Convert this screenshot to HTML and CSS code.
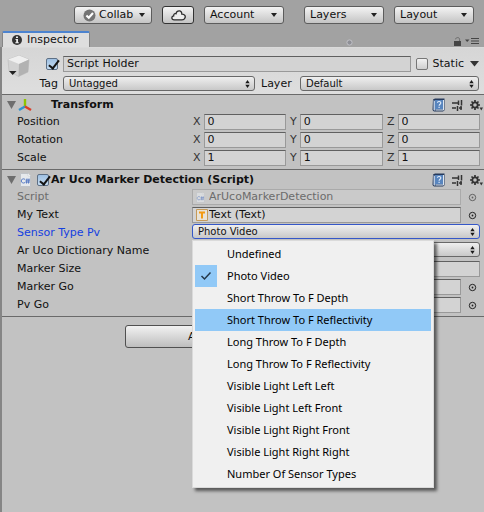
FILE: index.html
```html
<!DOCTYPE html>
<html lang="en">
<head>
<meta charset="utf-8">
<title>Inspector</title>
<link rel="stylesheet" href="styles.css">
</head>
<body>
<svg class="defs" aria-hidden="true">
  <symbol id="updown" viewBox="0 0 5 8"><path d="M0.3 3.2 2.5 0 4.7 3.2zM0.3 4.8 2.5 8 4.7 4.8z" fill="#1a1a1a"/></symbol>
  <symbol id="down" viewBox="0 0 6 4"><path d="M0 0H6L3 4z" fill="#222"/></symbol>
  <symbol id="book" viewBox="0 0 13 14">
    <path d="M1 1.5 3 .5H12.5V12.5H12L11 13.5H2L.5 12z" fill="#263a5c"/>
    <path d="M1.5 2 3 3V13L1.5 11.5z" fill="#b9c9df"/>
    <path d="M3 2H11V11.5H3z" fill="#5885be"/>
    <path d="M3.5 12H11.5V2" fill="none" stroke="#dce5ef"/>
    <path d="M5.4 4.8C5.5 3 8.9 3 8.8 5 8.7 6.3 7.2 6.3 7.1 7.8M7.1 8.8V10" fill="none" stroke="#e8f0fc" stroke-width="1.1"/>
  </symbol>
  <symbol id="sliders" viewBox="0 0 11 11"><path d="M0 3H6M0 8H4M7 8H10M9 3H10M6.5 0.5V5M9.5 0V5.5M5.5 6V11M9 6V10" fill="none" stroke="#333" stroke-width="1.5"/></symbol>
  <symbol id="gear" viewBox="0 0 13 11"><circle cx="5" cy="5" r="2.7" fill="none" stroke="#333" stroke-width="1.8"/><path d="M5 0V2M5 8V10M0 5H2M8 5H10M1.5 1.5 3 3M7 7 8.5 8.5M1.5 8.5 3 7M7 3 8.5 1.5" stroke="#333" stroke-width="1.7"/><path d="M9.6 7.5H13L11.3 10.5z" fill="#333"/></symbol>
  <symbol id="pick" viewBox="0 0 9 9"><circle cx="4.5" cy="4.5" r="3.2" fill="none" stroke="#222" stroke-width="1"/><circle cx="4.5" cy="4.5" r="0.9" fill="#222"/></symbol>
  <symbol id="csharp" viewBox="0 0 11 14"><path d="M.5 .5H8L10.5 3V13.5H.5z" fill="#e6e9ec" stroke="#bfc3c8"/><path d="M8 .5V3H10.5" fill="#fff" stroke="#c8ccd0" stroke-width=".6"/><path d="M5 6.3C2.5 5 1.3 6.6 1.3 8S2.8 10.8 5 9.6M7 5.5 6.5 10.5M9 5.5 8.5 10.5M5.5 7.1H10M5.3 9H9.8" fill="none" stroke="#4b70c0" stroke-width=".9"/></symbol>
</svg>

<header class="toolbar">
  <button class="tool" type="button">
    <svg class="ic-collab" viewBox="0 0 13 13"><circle cx="6.5" cy="6.5" r="6" fill="#747474"/><path d="M3.4 6.4 5.8 8.8 10 4" fill="none" stroke="#fff" stroke-width="2.1"/></svg>
    Collab<svg class="ic-down"><use href="#down"/></svg>
  </button>
  <button class="tool cloud" type="button" aria-label="Services">
    <svg class="ic-cloud" viewBox="0 0 15 11"><path d="M3.2 9.8C.2 9.8.1 6.2 2.7 5.9 2.5 3.7 4.3 3.3 5 3.7 6-.2 11-.1 10.8 4.1 13.8 4 14.9 6.3 13.8 8.2 13.2 9.5 12 9.8 11 9.8z" fill="#eee" stroke="#2b2b2b" stroke-width="1.3"/></svg>
  </button>
  <button class="tool wide" type="button">Account<svg class="ic-down"><use href="#down"/></svg></button>
  <button class="tool wide layers" type="button">Layers<svg class="ic-down"><use href="#down"/></svg></button>
  <button class="tool wide" type="button">Layout<svg class="ic-down"><use href="#down"/></svg></button>
</header>

<nav class="tabbar">
  <button class="tab" type="button">
    <svg class="ic-info" viewBox="0 0 10 10"><circle cx="5" cy="5" r="5" fill="#333"/><path d="M4 1.6H6V3H4zM3.5 4H6V7.3H6.8V8.2H3.3V7.3H4.2V5H3.5z" fill="#eee"/></svg>
    Inspector
  </button>
  <svg class="ic-dot" viewBox="0 0 7 7"><circle cx="3.5" cy="3.5" r="2.6" fill="#8e8f96" stroke="#c0c0c6"/></svg>
  <span class="tabtools">
    <button class="plain" type="button" aria-label="Lock"><svg class="ic-lock" viewBox="0 0 7 9"><path d="M0 4H7V9H0z" fill="#454545"/><path d="M1.5 2.3C1.8 0 5.6 0 5.6 2.3V4" fill="none" stroke="#6a6a6a"/></svg></button>
    <button class="plain" type="button" aria-label="Menu"><svg class="ic-menu" viewBox="0 0 14 6"><path d="M0 1.5H4.5L2.2 4z" fill="#454545"/><path d="M6 .5H14M6 3H14M6 5.5H14" stroke="#454545"/></svg></button>
  </span>
</nav>

<main class="panel">
  <section class="object">
    <div class="object-icon">
      <svg class="ic-cube" viewBox="0 0 23 22"><path d="M1 4.5 12 .5 22 4.5 21 17 11.5 21.5 2 16z" fill="#d2d2d2" stroke="#bbb" stroke-width=".6"/><path d="M1 4.5 12 .5 22 4.5 12 9z" fill="#efefef"/><path d="M12 9 22 4.5 21 17 11.5 21.5z" fill="#b2b2b2"/><path d="M2 16H9.5L5.7 20z" fill="#222"/></svg>
    </div>
    <div class="object-fields">
      <div class="object-row">
        <span class="lead"><input class="check" id="active" type="checkbox" checked aria-label="Active"></span>
        <input class="field" type="text" value="Script Holder" aria-label="Name">
        <input class="check static" id="static" type="checkbox"><label class="static-label" for="static">Static</label>
        <button class="plain" type="button" aria-label="Static options"><svg class="ic-static" viewBox="0 0 9 6"><path d="M0 0H9L4.5 5.5z" fill="#333"/></svg></button>
      </div>
      <div class="object-row">
        <label class="lead" for="tag">Tag</label>
        <span class="select"><select id="tag"><option>Untagged</option></select><svg class="ic-ud"><use href="#updown"/></svg></span>
        <label class="layer-label" for="layer">Layer</label>
        <span class="select layer"><select id="layer"><option>Default</option></select><svg class="ic-ud"><use href="#updown"/></svg></span>
      </div>
    </div>
  </section>

  <section class="component">
    <div class="head">
      <svg class="ic-fold" viewBox="0 0 9 8"><path d="M0 0H9L4.5 8z" fill="#6e6e6e"/></svg>
      <svg class="ic-axes" viewBox="0 0 14 14"><path d="M7 8.5V1" stroke="#8fc400" stroke-width="2.4"/><path d="M7 8.5 1 12" stroke="#2f93d0" stroke-width="2.4"/><path d="M7 8.5 13 12" stroke="#dd3b26" stroke-width="2.4"/></svg>
      <h2 class="transform-title">Transform</h2>
      <span class="head-tools">
        <button class="plain" type="button" aria-label="Help"><svg class="ic-book"><use href="#book"/></svg></button>
        <button class="plain" type="button" aria-label="Presets"><svg class="ic-sliders"><use href="#sliders"/></svg></button>
        <button class="plain" type="button" aria-label="Settings"><svg class="ic-gear"><use href="#gear"/></svg></button>
      </span>
    </div>
    <div class="row"><span>Position</span><div class="vector">
      <label>X<input class="field" type="text" value="0"></label><label>Y<input class="field" type="text" value="0"></label><label>Z<input class="field" type="text" value="0"></label></div></div>
    <div class="row"><span>Rotation</span><div class="vector">
      <label>X<input class="field" type="text" value="0"></label><label>Y<input class="field" type="text" value="0"></label><label>Z<input class="field" type="text" value="0"></label></div></div>
    <div class="row"><span>Scale</span><div class="vector">
      <label>X<input class="field" type="text" value="1"></label><label>Y<input class="field" type="text" value="1"></label><label>Z<input class="field" type="text" value="1"></label></div></div>
  </section>

  <section class="component">
    <div class="head">
      <svg class="ic-fold" viewBox="0 0 9 8"><path d="M0 0H9L4.5 8z" fill="#6e6e6e"/></svg>
      <svg class="ic-script"><use href="#csharp"/></svg>
      <input class="check" id="enabled" type="checkbox" checked>
      <h2><label for="enabled">Ar Uco Marker Detection (Script)</label></h2>
      <span class="head-tools">
        <button class="plain" type="button" aria-label="Help"><svg class="ic-book"><use href="#book"/></svg></button>
        <button class="plain" type="button" aria-label="Presets"><svg class="ic-sliders"><use href="#sliders"/></svg></button>
        <button class="plain" type="button" aria-label="Settings"><svg class="ic-gear"><use href="#gear"/></svg></button>
      </span>
    </div>
    <div class="row disabled"><label for="script">Script</label><div class="ref">
      <span class="field boxed"><svg class="ic-mini"><use href="#csharp"/></svg><input id="script" type="text" value="ArUcoMarkerDetection" disabled></span>
      <button class="plain" type="button" aria-label="Pick" disabled><svg class="ic-pick"><use href="#pick"/></svg></button></div></div>
    <div class="row"><label for="mytext">My Text</label><div class="ref">
      <span class="field boxed"><svg class="ic-text" viewBox="0 0 12 12"><path d="M.5 .5H11.5V11.5H.5z" fill="#e8e3d8" stroke="#c49a5a"/><path d="M3 3.5H9M6 3V9.5" stroke="#f39a12" stroke-width="2"/></svg><input id="mytext" type="text" value="Text (Text)"></span>
      <button class="plain" type="button" aria-label="Pick"><svg class="ic-pick"><use href="#pick"/></svg></button></div></div>
    <div class="row"><label class="active" for="sensor">Sensor Type Pv</label>
      <div class="dropdown">
        <span class="select focus"><select id="sensor"><option>Photo Video</option></select><svg class="ic-ud"><use href="#updown"/></svg></span>
        <ul class="menu" role="listbox" aria-label="Sensor Type Pv">
          <li role="option">Undefined</li>
          <li role="option" class="chosen" aria-selected="true"><svg class="ic-tick" viewBox="0 0 22 22"><path d="M6.5 11 9.5 14 15.5 7.5" fill="none" stroke="#24384a" stroke-width="1.5"/></svg>Photo Video</li>
          <li role="option">Short Throw To F Depth</li>
          <li role="option" class="hover">Short Throw To F Reflectivity</li>
          <li role="option">Long Throw To F Depth</li>
          <li role="option">Long Throw To F Reflectivity</li>
          <li role="option">Visible Light Left Left</li>
          <li role="option">Visible Light Left Front</li>
          <li role="option">Visible Light Right Front</li>
          <li role="option">Visible Light Right Right</li>
          <li role="option">Number Of Sensor Types</li>
        </ul>
      </div></div>
    <div class="row"><label for="dict">Ar Uco Dictionary Name</label><span class="select"><select id="dict"><option></option></select><svg class="ic-ud"><use href="#updown"/></svg></span></div>
    <div class="row"><label for="size">Marker Size</label><input class="field" id="size" type="text"></div>
    <div class="row"><label for="marker">Marker Go</label><div class="ref"><input class="field" id="marker" type="text">
      <button class="plain" type="button" aria-label="Pick"><svg class="ic-pick"><use href="#pick"/></svg></button></div></div>
    <div class="row"><label for="pv">Pv Go</label><div class="ref"><input class="field" id="pv" type="text">
      <button class="plain" type="button" aria-label="Pick"><svg class="ic-pick"><use href="#pick"/></svg></button></div></div>
  </section>

  <div class="footer"><button class="add" type="button">Add Component</button></div>
</main>
</body>
</html>
```

FILE: styles.css
```css
* { box-sizing: border-box; }

body {
  margin: 0;
  min-height: 100vh;
  display: flex;
  flex-direction: column;
  background: #a2a2a2;
  color: #111;
  font: 11px/16px "DejaVu Sans", Verdana, sans-serif;
}

button, input, select { font: inherit; color: inherit; margin: 0; }
svg { display: block; flex: none; }
h2 { margin: 0; font-size: 11px; font-weight: bold; }
.defs { display: none; }

.plain { padding: 0; border: 0; background: none; display: flex; }

/* Top toolbar */
.toolbar {
  display: flex;
  justify-content: flex-end;
  gap: 10px;
  padding: 6px 10px 7px;
}
.tool {
  display: flex;
  align-items: center;
  gap: 3px;
  width: 78px;
  height: 18px;
  padding: 0 6px 0 8px;
  border: 1px solid #5c5c5c;
  border-radius: 3px;
  background: linear-gradient(#f4f4f4, #c4c4c4);
}
.tool.wide { width: 80px; padding-left: 5px; }
.tool.cloud { width: 32px; border-color: #333; }
.tool.layers { margin-left: 10px; }
.tool .ic-down { margin-left: auto; }
.ic-down { width: 6px; height: 4px; }
.ic-collab { width: 13px; height: 13px; }
.ic-cloud { width: 15px; height: 11px; }

/* Tab strip */
.tabbar {
  display: flex;
  align-items: center;
  padding: 0 5px 0 2px;
}
.tab {
  display: flex;
  align-items: center;
  gap: 5px;
  width: 88px;
  height: 16px;
  padding: 0 9px;
  border: 1px solid #858585;
  border-top: 2px solid #4c83cf;
  border-bottom: 0;
  border-radius: 2px 2px 0 0;
  background: #dedede;
}
.ic-info { width: 10px; height: 10px; }
.ic-dot { width: 7px; height: 7px; margin-left: 256px; margin-top: 7px; }
.tabtools { display: flex; align-items: center; gap: 4px; margin-left: auto; padding-top: 4px; }
.ic-lock { width: 7px; height: 9px; }
.ic-menu { width: 14px; height: 6px; }

/* Inspector panel */
.panel {
  flex: 1;
  border-left: 2px solid #858585;
  background: #c2c2c2;
}
.object {
  display: flex;
  gap: 4px;
  padding: 7px 5px 2px 5px;
  border-top: 1px solid #dadada;
  background: linear-gradient(#d6d6d6, #dedede);
}
.object-icon { width: 23px; }
.ic-cube { width: 23px; height: 22px; }
.object-fields { flex: 1; display: grid; gap: 3px; }
.object-row { display: flex; align-items: center; height: 17px; }
.lead { width: 29px; padding-right: 5px; display: flex; justify-content: flex-end; }
.static { margin-left: 5px; }
.static-label { margin: 0 6px 0 5px; }
.ic-static { width: 9px; height: 6px; }
.layer-label { margin: 0 6px; width: 33px; }
.object-row .select { flex: 192; }
.object-row .select.layer { flex: 179; }

.check {
  appearance: none;
  flex: none;
  width: 12px;
  height: 12px;
  border: 1px solid #777;
  border-radius: 2px;
  background: linear-gradient(#f2f2f2, #cfcfcf);
  position: relative;
}
.check:checked { background: linear-gradient(#9fc0e2, #c4dcf2); border-color: #5d7086; }
.check:checked::after {
  content: "";
  position: absolute;
  left: 4px;
  top: -1px;
  width: 4px;
  height: 9px;
  border: solid #141414;
  border-width: 0 2px 2px 0;
  transform: rotate(38deg);
}

.field {
  flex: 1;
  width: 100%;
  min-width: 0;
  height: 16px;
  padding: 0 3px;
  border: 1px solid #999;
  border-top: 1px solid #606060;
  border-radius: 0;
  background: #d3d3d3;
}

.select { display: flex; align-items: center; min-width: 0; position: relative; }
.select select {
  appearance: none;
  width: 100%;
  height: 15px;
  padding: 0 14px 0 5px;
  border: 1px solid #686868;
  border-radius: 3px;
  background: linear-gradient(#efefef, #c8c8c8);
  font-size: 10px;
  line-height: 13px;
}
.select.focus select { border: 1px solid #3557c8; outline: 0; }
.ic-ud { position: absolute; right: 5px; width: 5px; height: 8px; pointer-events: none; }

/* Components */
.component { border-top: 1px solid #6a6a6a; padding: 2px 4px 2px 0; }
.head { display: flex; align-items: center; height: 16px; padding: 0 0 0 5px; }
.ic-fold { width: 9px; height: 8px; }
.ic-axes { width: 14px; height: 14px; margin-left: 2px; }
.ic-script { width: 11px; height: 14px; margin: 0 6px 0 4px; }
.head h2 { margin-left: 2px; }
.head .transform-title { margin-left: 19px; }
.head-tools { display: flex; align-items: center; gap: 7px; margin-left: auto; margin-right: -3px; }
.ic-book { width: 13px; height: 14px; }
.ic-sliders { width: 11px; height: 11px; }
.ic-gear { width: 13px; height: 11px; }

.row {
  display: grid;
  grid-template-columns: 175px 1fr;
  align-items: center;
  height: 18px;
  padding-left: 15px;
}
.row > .select, .dropdown { align-self: start; }
.vector { display: grid; grid-template-columns: repeat(3, 1fr); gap: 4px; padding-left: 1px; }
.vector label { display: flex; align-items: center; gap: 3px; color: #333; }
.vector .field { color: #111; }
.ref { display: flex; align-items: center; gap: 7px; padding-right: 3px; }
.boxed { display: flex; align-items: center; gap: 1px; }
.boxed input { flex: 1; min-width: 0; padding: 0; border: 0; background: none; height: 14px; }
.ic-mini { width: 9px; height: 11px; margin-right: 3px; }
.ic-text { width: 12px; height: 12px; }
.ic-pick { width: 9px; height: 9px; }
.disabled label { color: #6c6c6c; }
.disabled .boxed { background: #cacaca; border-color: #aaa; color: #6c6c6c; }
.disabled svg { opacity: .6; }
.active { color: #1440e0; }

/* Popup list */
.dropdown { position: relative; }
.menu {
  position: absolute;
  z-index: 1;
  top: 16px;
  left: 0;
  width: 242px;
  margin: 0;
  padding: 2px;
  list-style: none;
  border: 1px solid #dadada;
  background: #f0f0f0;
  box-shadow: 3px 3px 3px rgba(0, 0, 0, .55);
  color: #000;
  font: 11px/22px "Noto Sans", "Segoe UI", sans-serif;
}
.menu li { height: 22px; padding-left: 32px; }
.menu .chosen { display: flex; gap: 10px; padding-left: 0; }
.menu .hover { background: #91c9f7; }
.ic-tick { width: 22px; height: 22px; background: #91c9f7; }

.footer { border-top: 1px solid #6a6a6a; padding: 8px 8px 8px 4px; display: flex; justify-content: center; }
.add {
  width: 232px;
  height: 23px;
  padding: 0 0 0 62px;
  text-align: left;
  border: 1px solid #505050;
  border-radius: 3px;
  background: linear-gradient(#f2f2f2, #bdbdbd);
}
```
